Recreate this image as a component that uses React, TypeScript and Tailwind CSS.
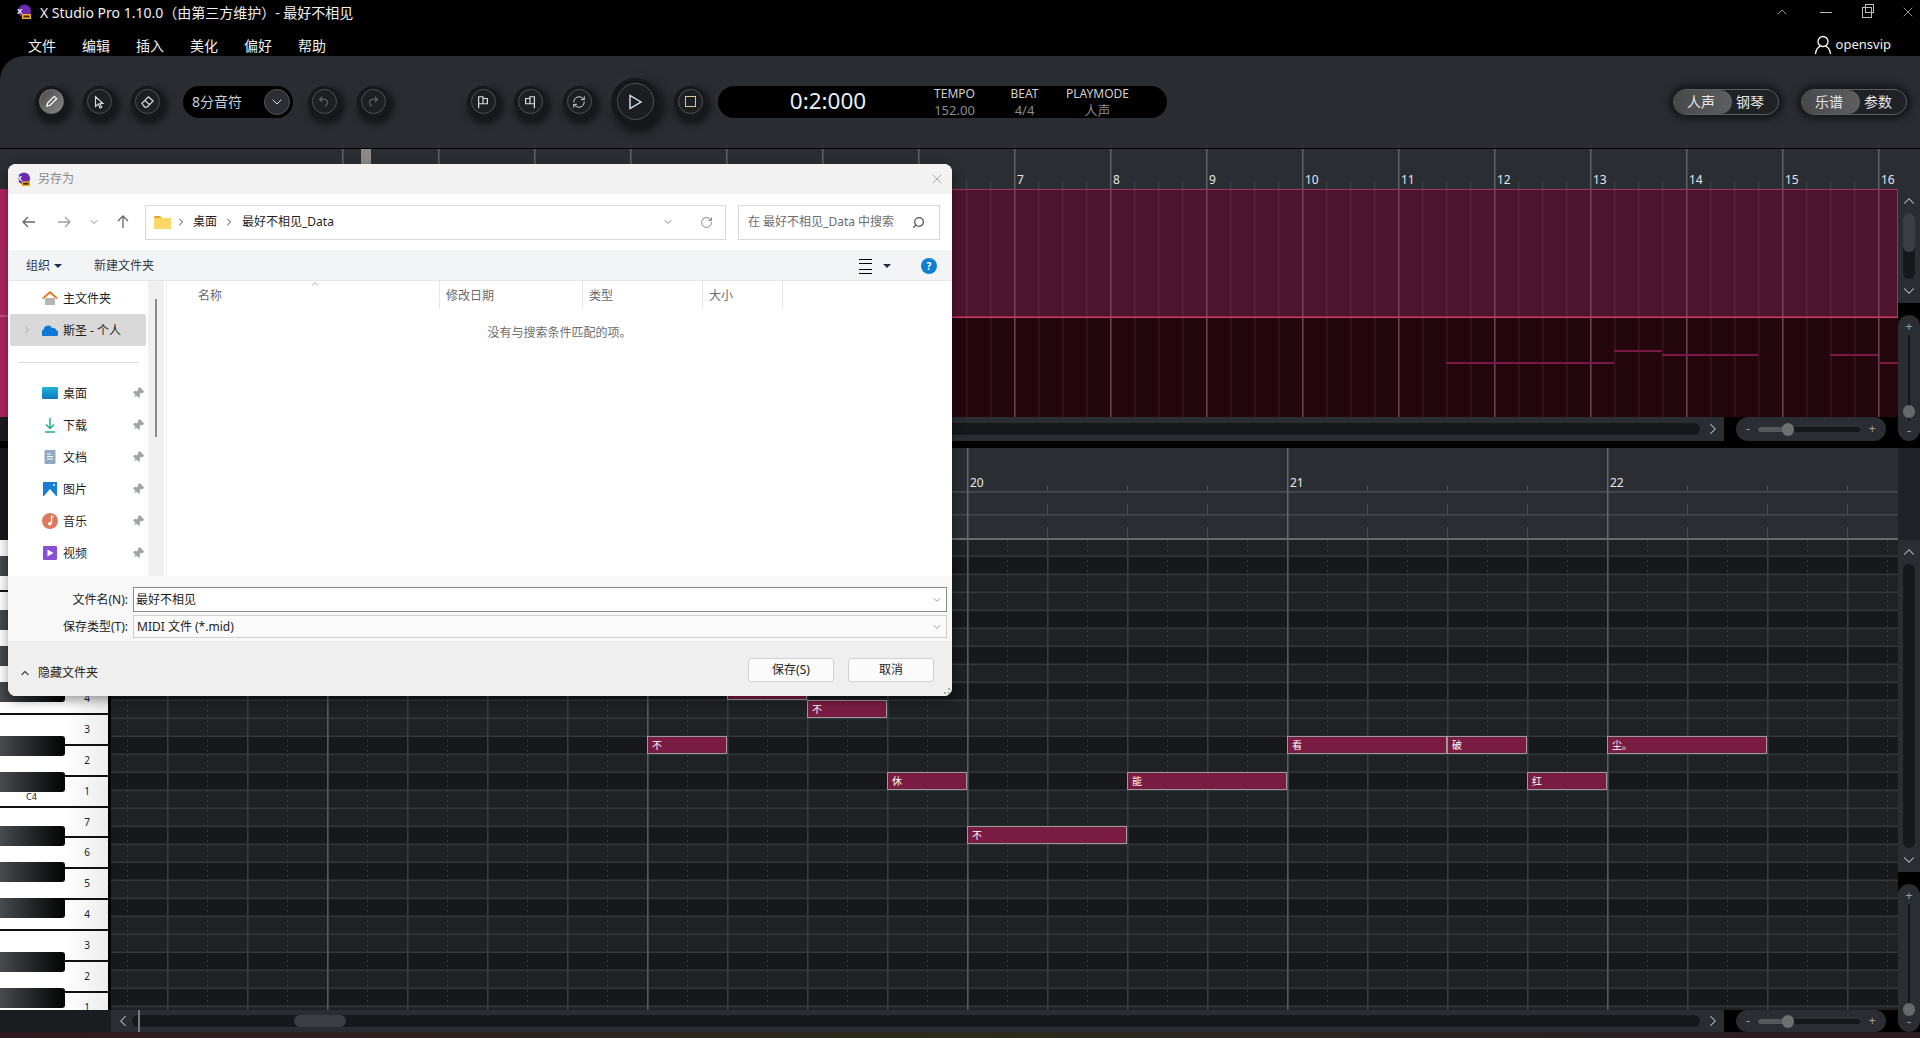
import type { ReactNode } from "react";
import { ChevronDown, ChevronRight, ChevronUp, Pin, RefreshCw, RotateCw, Search, X } from "lucide-react";

const range = (from: number, to: number, step: number) => {
  const out: number[] = [];
  for (let v = from; v <= to; v += step) out.push(v);
  return out;
};

const DARK_ROWS = [1, 4, 6, 8, 11];
const isDark = (k: number) => DARK_ROWS.includes(k % 12);

const NOTES = [
  { x: 727, w: 80, k: 8, text: "不" },
  { x: 807, w: 80, k: 9, text: "不" },
  { x: 647, w: 80, k: 11, text: "不" },
  { x: 887, w: 80, k: 13, text: "休" },
  { x: 1127, w: 160, k: 13, text: "能" },
  { x: 1527, w: 80, k: 13, text: "红" },
  { x: 1287, w: 160, k: 11, text: "看" },
  { x: 1447, w: 80, k: 11, text: "破" },
  { x: 1607, w: 160, k: 11, text: "尘。" },
  { x: 967, w: 160, k: 16, text: "不" },
];

const WHITE_KEYS = ["2", "1", "7", "6", "5", "4", "3", "2", "1", "7", "6", "5", "4", "3", "2", "1"];

const AppLogo = ({ size }: { size: number }) => (
  <svg width={size} height={size} viewBox="0 0 16 16">
    <circle cx="8.5" cy="7" r="6.5" fill="#6a2bb0" />
    <rect x="6" y="10" width="9" height="5" fill="#f2b01e" />
    <rect x="7.5" y="11.5" width="6" height="2" fill="#3a2a10" />
    <text x="1" y="10" fontSize="8" fontWeight="700" fill="#fff" fontFamily="Liberation Sans">X</text>
  </svg>
);

const RoundButton = ({ children, active }: { children: ReactNode; active?: boolean }) => (
  <div className="flex h-[32px] w-[32px] shrink-0 items-center justify-center rounded-full bg-[#16181b] shadow-[2px_3px_6px_3px_rgba(0,0,0,0.55),-1px_-1px_4px_2px_rgba(255,255,255,0.05)]">
    <div
      className={
        active
          ? "flex h-[25px] w-[25px] items-center justify-center rounded-full border border-[#777] bg-gradient-to-br from-[#4a4a4a] to-[#8a8a8a] text-white"
          : "flex h-[25px] w-[25px] items-center justify-center rounded-full border border-[#4d5054] bg-[#1d1f23] text-[#d8dde2]"
      }
    >
      {children}
    </div>
  </div>
);

const Toggle = ({ left, right, className }: { left: string; right: string; className: string }) => (
  <div className={`flex h-[26px] w-[106px] items-center rounded-[13px] border border-[#5b5e62] bg-[#1f2125] text-[14px] text-[#e8e8e8] shadow-[0_0_7px_4px_rgba(0,0,0,0.5)] ${className}`}>
    <div className="flex h-full w-[58px] items-center justify-center rounded-[13px] bg-gradient-to-r from-[#474849] to-[#5e5f60] pr-[3px]">{left}</div>
    <div className="flex-1 pr-[9px] text-center">{right}</div>
  </div>
);

const ZoomPill = () => (
  <div className="ml-[12px] flex h-full w-[150px] items-center justify-between rounded-[12px] bg-[#2a2d32] px-[10px] text-[13px] text-[#9a9da0]">
    <span>-</span>
    <div className="relative h-[5px] w-[102px] rounded-full bg-[#14171a]">
      <div className="h-full w-[28px] rounded-l-full bg-[#55575a]" />
      <div className="absolute left-[24px] top-[-4px] h-[13px] w-[12px] rounded-full bg-[#6e6f70]" />
    </div>
    <span>+</span>
  </div>
);

const ScrollRow = ({ height, left, thumb }: { height: string; left: string; thumb?: boolean }) => (
  <div className={`flex ${height} w-full`}>
    <div className={`w-[111px] shrink-0 ${left}`} />
    <div className="relative flex w-[1613px] shrink-0 items-center bg-[#2a2d32] text-[#c8ccd0]">
      <ChevronRight className="ml-[3px] h-[18px] w-[18px] shrink-0 rotate-180" strokeWidth={1.4} />
      <div className="relative h-[12px] w-[1568px] rounded-full bg-[#15191c]">
        {thumb && <div className="absolute left-[162px] top-0 h-full w-[52px] rounded-full bg-[#3a3d42]" />}
      </div>
      <ChevronRight className="ml-[4px] h-[18px] w-[18px] shrink-0" strokeWidth={1.4} />
      {thumb && <div className="absolute left-[27px] top-0 h-full w-[2px] bg-[#77797c]" />}
    </div>
    <ZoomPill />
  </div>
);

const VerticalZoom = ({ height, thumb }: { height: string; thumb: string }) => (
  <div className={`mt-[12px] flex ${height} w-full flex-col items-center justify-between rounded-[11px] bg-[#2a2d32] py-[2px] text-[13px] leading-[18px] text-[#9a9da0]`}>
    <span>+</span>
    <div className="relative w-[2px] flex-1 bg-[#14171a]">
      <div className={`absolute left-[-5px] h-[13px] w-[12px] rounded-full bg-[#66686a] ${thumb}`} />
    </div>
    <span>-</span>
  </div>
);

const VerticalScroll = ({ height, thumb }: { height: string; thumb?: boolean }) => (
  <div className={`flex ${height} flex-col items-center bg-[#2a2d32] text-[#c8ccd0]`}>
    <ChevronUp className="my-[3px] h-[18px] w-[18px] shrink-0" strokeWidth={1.4} />
    <div className="w-[12px] flex-1 rounded-full bg-[#15191c]">
      {thumb && <div className="h-[39px] rounded-full bg-[#3a3d42]" />}
    </div>
    <ChevronDown className="my-[3px] h-[18px] w-[18px] shrink-0" strokeWidth={1.4} />
  </div>
);

const TitleBar = () => (
  <div className="relative h-[56px] shrink-0 bg-black text-white">
    <div className="flex h-[24px] items-center pl-[16px] text-[14px] text-[#f0f0f0]">
      <AppLogo size={16} />
      <span className="ml-[8px]">X Studio Pro 1.10.0（由第三方维护）- 最好不相见</span>
      <div className="ml-auto flex items-center text-[#bdbdbd]">
        <ChevronUp className="mr-[30px] h-[16px] w-[16px]" strokeWidth={1.2} />
        <div className="mr-[30px] h-[1px] w-[12px] bg-[#bdbdbd]" />
        <div className="relative mr-[28px] h-[11px] w-[10px] border border-[#bdbdbd] before:absolute before:left-[2px] before:top-[-4px] before:h-[9px] before:w-[9px] before:border before:border-[#bdbdbd]" />
        <X className="mr-[4px] h-[16px] w-[16px]" strokeWidth={1.2} />
      </div>
    </div>
    <div className="flex h-[32px] items-center pl-[28px] pt-[10px] text-[14px] text-[#f0f0f0]">
      <div className="flex gap-[26px]">
        {["文件", "编辑", "插入", "美化", "偏好", "帮助"].map((m) => (
          <span key={m}>{m}</span>
        ))}
      </div>
      <div className="ml-auto mr-[29px] flex items-center gap-[4px] text-[13px]">
        <svg width="18" height="20" viewBox="0 0 18 20" fill="none" stroke="#fff" strokeWidth="1.3">
          <circle cx="9" cy="6.5" r="5" />
          <path d="M1.5 19c.5-4.5 3-7 5-7.8M16.5 19c-.5-4.5-3-7-5-7.8" />
        </svg>
        opensvip
      </div>
    </div>
  </div>
);

const Toolbar = () => (
  <div className="flex h-[93px] shrink-0 items-center rounded-tl-[24px] border-b border-black bg-[#292c31] pb-[1px] pl-[35px]">
    <RoundButton active>
      <svg width="15" height="15" viewBox="0 0 16 16" fill="none" stroke="#fff" strokeWidth="1.3">
        <path d="M3 13l1-3.5L11 2.5l2.5 2.5L6.5 12z" />
      </svg>
    </RoundButton>
    <div className="ml-[16px]">
      <RoundButton>
        <svg width="14" height="14" viewBox="0 0 16 16" fill="none" stroke="currentColor" strokeWidth="1.3">
          <path d="M4 2l8.5 7.5H9l2 4.5-1.8.8-2-4.6L4 13z" />
        </svg>
      </RoundButton>
    </div>
    <div className="ml-[16px]">
      <RoundButton>
        <svg width="15" height="15" viewBox="0 0 16 16" fill="none" stroke="currentColor" strokeWidth="1.3">
          <path d="M2 10l7-7 5 4.5-6.5 6.5H5zM5.2 6.8l5 4.6" />
        </svg>
      </RoundButton>
    </div>
    <div className="ml-[20px] flex h-[32px] w-[110px] items-center justify-between rounded-[16px] bg-black pl-[9px] pr-[3px] text-[14px] text-[#c4d0dc]">
      8分音符
      <div className="flex h-[26px] w-[26px] items-center justify-center rounded-full border border-[#55585c] bg-[#2b2e32] text-[#d8dde2]">
        <ChevronDown className="h-[16px] w-[16px]" strokeWidth={1.5} />
      </div>
    </div>
    <div className="ml-[15px]">
      <RoundButton>
        <svg width="14" height="14" viewBox="0 0 16 16" fill="none" stroke="#5f6265" strokeWidth="1.5">
          <path d="M6 2L3 5l3 3M3 5h5c3 0 4 2 4 3.5 0 2-1.5 3-2.5 4.5" />
        </svg>
      </RoundButton>
    </div>
    <div className="ml-[17px]">
      <RoundButton>
        <svg width="14" height="14" viewBox="0 0 16 16" fill="none" stroke="#5f6265" strokeWidth="1.5">
          <path d="M10 2l3 3-3 3M13 5H8C5 5 4 7 4 8.5c0 2 1.5 3 2.5 4.5" />
        </svg>
      </RoundButton>
    </div>
    <div className="ml-[78px]">
      <RoundButton>
        <svg width="14" height="14" viewBox="0 0 16 16" fill="none" stroke="currentColor" strokeWidth="1.4">
          <path d="M3 15V2h5v8H3M8 4h5v6H8" />
        </svg>
      </RoundButton>
    </div>
    <div className="ml-[15px]">
      <RoundButton>
        <svg width="14" height="14" viewBox="0 0 16 16" fill="none" stroke="currentColor" strokeWidth="1.4">
          <path d="M13 15V2H8v8h5M8 4H3v6h5" />
        </svg>
      </RoundButton>
    </div>
    <div className="ml-[17px]">
      <RoundButton>
        <RefreshCw className="h-[14px] w-[14px]" strokeWidth={1.6} />
      </RoundButton>
    </div>
    <div className="ml-[16px] flex h-[48px] w-[48px] shrink-0 items-center justify-center rounded-full bg-[#15171a] shadow-[3px_4px_8px_3px_rgba(0,0,0,0.55),-1px_-1px_5px_2px_rgba(255,255,255,0.05)]">
      <div className="flex h-[37px] w-[37px] items-center justify-center rounded-full border border-[#4d5054] bg-[#1b1d20]">
        <svg width="16" height="16" viewBox="0 0 16 16" fill="none" stroke="#d8e4f0" strokeWidth="1.4">
          <path d="M3 1.5v13L14 8z" />
        </svg>
      </div>
    </div>
    <div className="ml-[15px]">
      <RoundButton>
        <div className="h-[11px] w-[11px] border-[1.5px] border-[#d8c890]" />
      </RoundButton>
    </div>
    <div className="ml-[12px] flex h-[32px] w-[449px] shrink-0 items-center rounded-[16px] bg-black text-center text-[#d0d0d0]">
      <div className="w-[206px] pl-[14px] text-[22.5px] leading-none text-[#e8eef4]">0:2:000</div>
      <div className="flex w-[61px] flex-col text-[12px] leading-[16px]">
        <span>TEMPO</span>
        <span className="text-[13px] text-[#8a8d90]">152.00</span>
      </div>
      <div className="flex w-[79px] flex-col text-[12px] leading-[16px]">
        <span>BEAT</span>
        <span className="text-[13px] text-[#8a8d90]">4/4</span>
      </div>
      <div className="flex w-[67px] flex-col text-[12px] leading-[16px]">
        <span>PLAYMODE</span>
        <span className="text-[13px] text-[#8a8d90]">人声</span>
      </div>
    </div>
    <Toggle left="人声" right="钢琴" className="ml-[505.5px]" />
    <Toggle left="乐谱" right="参数" className="ml-[22px]" />
  </div>
);

const TrackSection = () => {
  const bars = range(342, 1878, 96);
  const beats = range(342, 1897, 24);
  return (
    <div className="h-[292px] shrink-0">
      <svg className="block h-[40px] w-[1920px] bg-[#2a2d32]" viewBox="0 0 1920 40">
        {beats.map((x) => (
          <rect key={x} x={x} y={32} width={1} height={8} fill="#45484c" />
        ))}
        {bars.map((x) => (
          <rect key={x} x={x} y={0} width={1.5} height={40} fill="#626568" />
        ))}
        <rect x={361} y={0} width={10} height={16} fill="#8a8a8a" />
        {bars.filter((x) => x >= 1014).map((x) => (
          <text key={x} x={x + 3} y={35} fontSize="12" fill="#e4e8ec">
            {(x - 1014) / 96 + 7}
          </text>
        ))}
      </svg>
      <div className="flex h-[252px]">
        <div className="w-[1898px] shrink-0">
          <div className="flex h-[228px]">
            <div className="flex w-[111px] shrink-0 flex-col bg-[#ad2560]">
              <div className="h-[126px]" />
              <div className="h-[2px] bg-[#c4517f]" />
            </div>
            <svg className="block h-[228px] w-[1787px]" viewBox="111 0 1787 228">
              <rect x={111} y={0} width={1787} height={128} fill="#4e132d" />
              <rect x={111} y={128} width={1787} height={100} fill="#24060f" />
              {beats.map((x) => (
                <g key={x}>
                  <rect x={x} y={0} width={1.5} height={128} fill="#5f2340" />
                  <rect x={x} y={128} width={1.5} height={100} fill="#3b1423" />
                </g>
              ))}
              {bars.map((x) => (
                <g key={x}>
                  <rect x={x} y={0} width={1.5} height={128} fill="#7d3e5b" />
                  <rect x={x} y={128} width={1.5} height={100} fill="#6a4354" />
                </g>
              ))}
              <rect x={111} y={0} width={1787} height={1} fill="#a8325f" />
              <rect x={111} y={127.5} width={1787} height={1.5} fill="#d03a6a" />
              <rect x={1897} y={0} width={1} height={128} fill="#a8325f" />
              {[
                [1446, 173, 168],
                [1614, 161, 48],
                [1662, 165, 96],
                [1830, 165, 48],
                [1878, 173, 20],
              ].map(([x, y, w]) => (
                <rect key={x} x={x} y={y} width={w} height={2} fill="#7a1a43" />
              ))}
            </svg>
          </div>
          <ScrollRow height="h-[24px]" left="bg-[#1a1c20]" />
        </div>
        <div className="flex-1">
          <VerticalScroll height="h-[114px]" thumb />
          <VerticalZoom height="h-[126px]" thumb="bottom-[3px]" />
        </div>
      </div>
    </div>
  );
};

const Piano = () => (
  <div className="relative h-[470px] w-[111px] shrink-0 overflow-hidden bg-black pr-[3px]">
    <div className="mt-[-10px]">
      {WHITE_KEYS.map((label, i) => (
        <div
          key={i}
          className="relative flex h-[30.857px] items-center justify-end border-b-2 border-[#111] bg-gradient-to-r from-white from-60% to-[#ececec] pr-[18px] text-[10px] text-[#222]"
        >
          {i >= 5 && label}
          {i === 8 && <span className="absolute bottom-[2px] left-[26px] text-[9px]">C4</span>}
        </div>
      ))}
    </div>
    {range(0, 26, 1).filter(isDark).map((k) => (
      <div
        key={k}
        className="absolute left-0 h-[20px] w-[65px] rounded-r-[3px] bg-gradient-to-r from-[#484c50] to-[#050505]"
        style={{ top: 18 * k - 2 }}
      />
    ))}
  </div>
);

const RollGrid = () => {
  const bars = range(327, 1897, 320);
  const beats = range(167, 1897, 80);
  const halves = range(127, 1897, 80);
  return (
    <div className="relative h-[470px] w-[1787px] shrink-0 overflow-hidden">
      <svg className="block h-[470px] w-[1787px]" viewBox="111 0 1787 470">
        {range(0, 26, 1).map((k) => (
          <rect key={k} x={111} y={18 * k - 2} width={1787} height={18} fill={isDark(k) ? "#17181c" : "#1f2225"} />
        ))}
        {range(1, 26, 1).map((k) => (
          <rect key={k} x={111} y={18 * k - 2.5} width={1787} height={1.6} fill="#34373a" />
        ))}
        {halves.map((x) => (
          <line key={x} x1={x + 0.5} x2={x + 0.5} y1={0} y2={470} stroke="#35383b" strokeDasharray="2 3" />
        ))}
        {beats.map((x) => (
          <rect key={x} x={x} y={0} width={1.5} height={470} fill="#3b3e41" />
        ))}
        {bars.map((x) => (
          <rect key={x} x={x} y={0} width={1.5} height={470} fill="#57595b" />
        ))}
      </svg>
      {NOTES.map((n) => (
        <div
          key={n.x}
          className="absolute flex h-[18px] items-center border border-[#9a9a9a] bg-[#7a1c42] pl-[4px] text-[10px] text-white"
          style={{ left: n.x - 111, top: 18 * n.k - 2, width: n.w }}
        >
          {n.text}
        </div>
      ))}
    </div>
  );
};

const RollSection = () => {
  const bars = range(327, 1897, 320);
  const beats = range(167, 1897, 80);
  return (
    <div className="flex h-[584px] shrink-0">
      <div className="w-[1898px] shrink-0">
        <div className="flex h-[92px]">
          <div className="w-[111px] shrink-0 bg-[#17181d]" />
          <svg className="block h-[92px] w-[1787px] bg-[#2a2d32]" viewBox="111 0 1787 92">
            <rect x={111} y={43} width={1787} height={1.6} fill="#4a4c4f" />
            <rect x={111} y={66} width={1787} height={1.6} fill="#44464a" />
            <rect x={111} y={90} width={1787} height={2} fill="#6a6a6a" />
            {beats.map((x) => (
              <g key={x} fill="#4a4c4f">
                <rect x={x} y={37} width={1} height={7} />
                <rect x={x} y={56} width={1} height={11} />
                <rect x={x} y={79} width={1} height={12} />
              </g>
            ))}
            {bars.map((x) => (
              <rect key={x} x={x} y={0} width={1.5} height={92} fill="#66686a" />
            ))}
            {bars.map((x) => (
              <text key={x} x={x + 3} y={39} fontSize="12" fill="#e4e8ec">
                {(x - 327) / 320 + 18}
              </text>
            ))}
          </svg>
        </div>
        <div className="flex h-[470px]">
          <Piano />
          <RollGrid />
        </div>
        <ScrollRow height="h-[22px]" left="bg-[#1a1c20]" thumb />
      </div>
      <div className="flex-1">
        <div className="h-[92px] bg-[#1f2226]" />
        <VerticalScroll height="h-[332px]" />
        <VerticalZoom height="h-[148px]" thumb="bottom-[-4px]" />
      </div>
    </div>
  );
};

const PLACES = [
  { name: "桌面", icon: <div className="h-[12px] w-[16px] rounded-[1px] bg-gradient-to-b from-[#22b4d8] to-[#0f78c0]" /> },
  {
    name: "下载",
    icon: (
      <svg width="16" height="16" viewBox="0 0 16 16" fill="none" stroke="#1fae8e" strokeWidth="1.5">
        <path d="M8 1v10M4 7.5l4 4 4-4M3 15h10" />
      </svg>
    ),
  },
  {
    name: "文档",
    icon: (
      <svg width="16" height="16" viewBox="0 0 16 16">
        <rect x="2.5" y="1" width="11" height="14" rx="1" fill="#8fa8c4" />
        <path d="M5 5h4M5 7.5h6M5 10h6" stroke="#fff" />
      </svg>
    ),
  },
  {
    name: "图片",
    icon: (
      <svg width="16" height="16" viewBox="0 0 16 16">
        <rect x="1" y="1" width="14" height="14" fill="#1a7fd4" />
        <path d="M2 15l6-7 6 7z" fill="#fff" />
        <circle cx="12" cy="4" r="1" fill="#fff" />
      </svg>
    ),
  },
  {
    name: "音乐",
    icon: (
      <svg width="16" height="16" viewBox="0 0 16 16">
        <circle cx="8" cy="8" r="8" fill="#dd7a5e" />
        <path d="M9.5 3v7.5M9.5 3l2 1" stroke="#fff" strokeWidth="1.3" fill="none" />
        <circle cx="7.8" cy="10.8" r="1.8" fill="#fff" />
      </svg>
    ),
  },
  {
    name: "视频",
    icon: (
      <svg width="16" height="16" viewBox="0 0 16 16">
        <rect x="1" y="1" width="14" height="14" rx="1" fill="#8a4fd8" />
        <path d="M5.5 4.5v7l6-3.5z" fill="#fff" />
      </svg>
    ),
  },
];

const SaveDialog = () => (
  <div className="absolute left-[8px] top-[164px] flex h-[532px] w-[944px] flex-col overflow-hidden rounded-[8px] bg-white text-[12px] text-[#222] shadow-[0_4px_12px_rgba(0,0,0,0.4)]">
    <div className="flex h-[30px] shrink-0 items-center bg-[#f2f2f3] pl-[8px] pr-[7px] text-[#8a8a8a]">
      <AppLogo size={15} />
      <span className="ml-[7px]">另存为</span>
      <X className="ml-auto h-[16px] w-[16px] text-[#8f8f8f]" strokeWidth={1.1} />
    </div>
    <div className="flex h-[56px] shrink-0 items-center text-[#7a7a7a]">
      <svg className="ml-[13px]" width="16" height="16" viewBox="0 0 16 16" fill="none" stroke="#666" strokeWidth="1.3">
        <path d="M14 8H2M7 3L2 8l5 5" />
      </svg>
      <svg className="ml-[19px]" width="16" height="16" viewBox="0 0 16 16" fill="none" stroke="#a0a0a0" strokeWidth="1.3">
        <path d="M2 8h12M9 3l5 5-5 5" />
      </svg>
      <ChevronDown className="ml-[16px] h-[12px] w-[12px] text-[#666]" strokeWidth={1.5} />
      <svg className="ml-[15px]" width="16" height="16" viewBox="0 0 16 16" fill="none" stroke="#666" strokeWidth="1.3">
        <path d="M8 14V2M3 7l5-5 5 5" />
      </svg>
      <div className="ml-[14px] flex h-[35px] w-[581px] items-center border border-[#d9d9d9] pl-[8px] text-[#1f1f1f]">
        <svg width="17" height="14" viewBox="0 0 17 14">
          <path d="M0 2a1 1 0 011-1h5l2 2H0z" fill="#e9a81f" />
          <rect x="0" y="3" width="17" height="11" rx="1" fill="#fbd767" />
        </svg>
        <ChevronRight className="ml-[4px] h-[12px] w-[12px] text-[#444]" strokeWidth={2} />
        <span className="ml-[6px]">桌面</span>
        <ChevronRight className="ml-[6px] h-[12px] w-[12px] text-[#444]" strokeWidth={2} />
        <span className="ml-[7px]">最好不相见_Data</span>
        <ChevronDown className="ml-auto h-[12px] w-[12px] text-[#666]" strokeWidth={1.5} />
        <RotateCw className="ml-[26px] mr-[12px] h-[13px] w-[13px] text-[#666]" strokeWidth={1.5} />
      </div>
      <div className="ml-[12px] flex h-[35px] w-[202px] items-center border border-[#d9d9d9] pl-[9px] pr-[14px] text-[#6d6d6d]">
        在 最好不相见_Data 中搜索
        <Search className="ml-auto h-[13px] w-[13px] -scale-x-100 text-[#555]" strokeWidth={2.4} />
      </div>
    </div>
    <div className="flex h-[31px] shrink-0 items-center border-b border-[#e6e6e6] bg-[#f3f4f6] pl-[18px] pt-[2px] text-[#2b3a4d]">
      <span>组织</span>
      <div className="ml-[4px] h-0 w-0 border-x-[4px] border-t-[4px] border-x-transparent border-t-[#1f2f44]" />
      <span className="ml-[32px]">新建文件夹</span>
      <div className="ml-auto flex h-[15px] w-[13px] flex-col justify-between border-y border-black py-[3px]">
        <div className="h-[1px] bg-black" />
        <div className="h-[1px] bg-black" />
      </div>
      <div className="ml-[11px] h-0 w-0 border-x-[4px] border-t-[4px] border-x-transparent border-t-[#1f2f44]" />
      <div className="ml-[30px] mr-[15px] flex h-[16px] w-[16px] items-center justify-center rounded-full bg-[#0f7fd4] text-[10px] font-bold text-white">?</div>
    </div>
    <div className="flex h-[295px] shrink-0">
      <div className="w-[140px] shrink-0 pt-[1px]">
        <div className="mx-[2px] flex h-[32px] items-center pl-[32px] text-[#1f1f1f]">
          <svg width="16" height="16" viewBox="0 0 16 16">
            <path d="M3 8v7h10V8z" fill="#b5b5b5" />
            <path d="M0 8l8-7 8 7-1.5 1L8 3.5 1.5 9z" fill="#e8730f" />
          </svg>
          <span className="ml-[5px] pt-[2px]">主文件夹</span>
        </div>
        <div className="mx-[2px] flex h-[32px] items-center rounded-[2px] bg-[#d9d9d9] pl-[11px] text-[#1f1f1f]">
          <ChevronRight className="h-[12px] w-[12px] text-[#888]" strokeWidth={1.4} />
          <svg className="ml-[9px]" width="16" height="11" viewBox="0 0 16 11">
            <path d="M1 11a3 3 0 01.5-6A4.5 4.5 0 0110 3a3.5 3.5 0 014.5 2.5A2.8 2.8 0 0113.5 11z" fill="#0f78d4" />
          </svg>
          <span className="ml-[5px] pt-[2px]">斯圣 - 个人</span>
        </div>
        <div className="mx-[10px] mt-[16px] h-[1px] bg-[#d9d9d9]" />
        <div className="mt-[14px]">
          {PLACES.map((p) => (
            <div key={p.name} className="relative mx-[2px] flex h-[32px] items-center pl-[32px] text-[#1f1f1f]">
              <div className="flex w-[16px] justify-center">{p.icon}</div>
              <span className="ml-[5px] pt-[2px]">{p.name}</span>
              <Pin className="absolute right-[2px] top-[10px] h-[12px] w-[12px] rotate-45 fill-[#a0a4a8] text-[#a0a4a8]" />
            </div>
          ))}
        </div>
      </div>
      <div className="relative w-[16px] shrink-0 bg-[#f0f0f0]">
        <div className="absolute left-[7px] top-[18px] h-[138px] w-[2px] bg-[#8a8a8a]" />
      </div>
      <div className="ml-[2px] flex-1 border-l border-[#f0f0f0]">
        <div className="relative flex h-[28px] text-[#6a6a6a]">
          <div className="w-[273px] border-r border-[#e5e5e5] pl-[31px] leading-[30px]">名称</div>
          <div className="w-[143px] border-r border-[#e5e5e5] pl-[6px] leading-[30px]">修改日期</div>
          <div className="w-[120px] border-r border-[#e5e5e5] pl-[6px] leading-[30px]">类型</div>
          <div className="w-[80px] border-r border-[#e5e5e5] pl-[6px] leading-[30px]">大小</div>
          <ChevronUp className="absolute left-[142px] top-[-2px] h-[10px] w-[12px] text-[#777]" strokeWidth={1.5} />
        </div>
        <div className="mt-[15px] text-center leading-[18px] text-[#6d6d6d]">没有与搜索条件匹配的项。</div>
      </div>
    </div>
    <div className="h-[65px] shrink-0 bg-[#f8f8f8] pt-[11px] text-[#222]">
      <div className="flex h-[25px] items-center">
        <div className="w-[122px] pr-[2px] text-right">文件名(N):</div>
        <div className="ml-[3px] flex h-full w-[814px] items-center border border-[#8a8a8a] bg-white pl-[2px] pr-[3px]">
          最好不相见
          <ChevronDown className="ml-auto h-[12px] w-[12px] text-[#666]" strokeWidth={1.3} />
        </div>
      </div>
      <div className="mt-[3px] flex h-[23px] items-center">
        <div className="w-[122px] pr-[2px] text-right">保存类型(T):</div>
        <div className="ml-[3px] flex h-full w-[814px] items-center border border-[#d0d0d0] bg-[#fbfbfb] pl-[3px] pr-[3px]">
          MIDI 文件 (*.mid)
          <ChevronDown className="ml-auto h-[12px] w-[12px] text-[#666]" strokeWidth={1.3} />
        </div>
      </div>
    </div>
    <div className="relative flex flex-1 items-start justify-between bg-[#efefef] pl-[11px] pr-[18px]">
      <div className="mt-[23px] flex h-[18px] items-center">
        <ChevronUp className="h-[12px] w-[12px] text-[#444]" strokeWidth={2.4} />
        <span className="ml-[7px]">隐藏文件夹</span>
      </div>
      <div className="mt-[17px] flex gap-[14px]">
        <div className="flex h-[24px] w-[86px] items-center justify-center rounded-[3px] border border-[#d0d0d0] bg-[#fbfbfb]">保存(S)</div>
        <div className="flex h-[24px] w-[86px] items-center justify-center rounded-[3px] border border-[#d0d0d0] bg-[#fbfbfb]">取消</div>
      </div>
      <div className="absolute bottom-[2px] right-[2px] h-[6px] w-[6px] border-b-2 border-r-2 border-dotted border-[#aaa]" />
    </div>
  </div>
);

export default function App() {
  return (
    <div className="relative flex h-[1038px] w-[1920px] flex-col overflow-hidden bg-black font-['Noto_Sans','Noto_Sans_CJK_SC',sans-serif]">
      <TitleBar />
      <Toolbar />
      <TrackSection />
      <div className="h-[7px] shrink-0" />
      <RollSection />
      <div className="h-[6px] shrink-0 bg-gradient-to-r from-[#2e1a1e] via-[#2c2a1c] to-[#2a1a22]" />
      <SaveDialog />
    </div>
  );
}
